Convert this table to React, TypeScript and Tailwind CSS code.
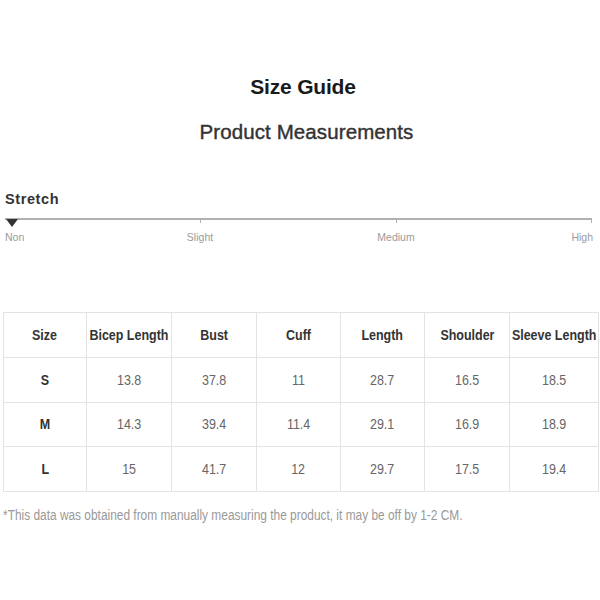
const headers = ['Size', 'Bicep Length', 'Bust', 'Cuff', 'Length', 'Shoulder', 'Sleeve Length']
const rows = [
  ['S', '13.8', '37.8', '11', '28.7', '16.5', '18.5'],
  ['M', '14.3', '39.4', '11.4', '29.1', '16.9', '18.9'],
  ['L', '15', '41.7', '12', '29.7', '17.5', '19.4'],
]
const widths = [83, 85, 85, 84, 84, 85, 89]

export default function App() {
  return (
    <div className="w-[600px] h-[600px] bg-white font-['Liberation_Sans',Arial,sans-serif] overflow-hidden">
      <div className="pt-[73px] text-center">
        <h1 className="text-[21px] font-bold text-[#1a1a1a] leading-[28px] ml-[6px] tracking-[-0.2px]">Size Guide</h1>
        <h2 className="mt-[18px] text-[20.5px] text-[#333] leading-[26px] ml-[13px] [-webkit-text-stroke:0.4px_#333] tracking-[0.1px]">Product Measurements</h2>
      </div>

      <div className="mt-[45px] pl-[5px] pr-[8px]">
        <p className="text-[14.5px] font-bold text-[#333] tracking-[0.6px] leading-[18px]">Stretch</p>
        <div className="relative mt-[10px] h-[12px]">
          <div className="h-[1.5px] bg-[#b0b0b0]" />
          <div className="absolute left-[195px] top-0 w-px h-[5px] bg-[#b0b0b0]" />
          <div className="absolute left-[391px] top-0 w-px h-[5px] bg-[#b0b0b0]" />
          <div className="absolute right-0 top-0 w-px h-[5px] bg-[#b0b0b0]" />
          <svg className="absolute left-[1px] top-[1px]" width="12" height="8" viewBox="0 0 12 8">
            <polygon points="0,0 12,0 6,8" fill="#333" />
          </svg>
        </div>
        <div className="relative h-[14px] text-[10.5px] text-[#9a9a9a] leading-[14px]">
          <span className="absolute left-0">Non</span>
          <span className="absolute left-[195px] -translate-x-1/2">Slight</span>
          <span className="absolute left-[391px] -translate-x-1/2">Medium</span>
          <span className="absolute right-[-1px]">High</span>
        </div>
      </div>

      <div className="mt-[68px] ml-[3px]">
        <table className="table-fixed border-collapse w-[595px]">
          <colgroup>
            {widths.map((w, i) => (
              <col key={i} style={{ width: w }} />
            ))}
          </colgroup>
          <thead>
            <tr className="h-[45px]">
              {headers.map((h) => (
                <th key={h} className="border border-[#e3e3e3] p-0 text-[14.5px] font-bold text-[#333] whitespace-nowrap leading-[18px]">
                  <div className="flex justify-center">
                    <span className="inline-block scale-x-[0.86]">{h}</span>
                  </div>
                </th>
              ))}
            </tr>
          </thead>
          <tbody>
            {rows.map((r) => (
              <tr key={r[0]} className="h-[44.5px]">
                {r.map((c, i) => (
                  <td
                    key={i}
                    className={
                      i === 0
                        ? 'border border-[#e3e3e3] p-0 text-center text-[14.5px] font-bold text-[#333] leading-[18px]'
                        : 'border border-[#e3e3e3] p-0 text-center text-[14.5px] text-[#666] leading-[18px]'
                    }
                  >
                    <span className="inline-block scale-x-[0.86]">{c}</span>
                  </td>
                ))}
              </tr>
            ))}
          </tbody>
        </table>
      </div>

      <p className="mt-[14px] ml-[3px] text-[14px] text-[#999] leading-[18px] origin-left scale-x-[0.85] whitespace-nowrap">
        *This data was obtained from manually measuring the product, it may be off by 1-2 CM.
      </p>
    </div>
  )
}
